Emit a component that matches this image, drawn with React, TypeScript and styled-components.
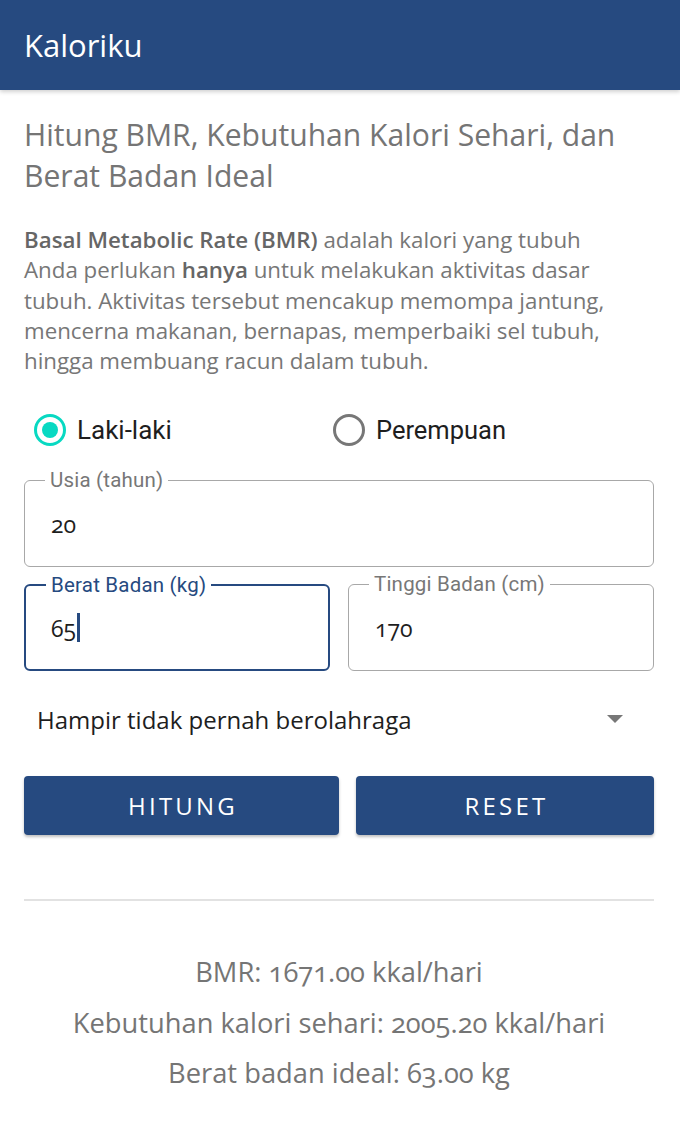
import React, { useState } from "react";
import styled, { createGlobalStyle } from "styled-components";

const Global = createGlobalStyle`
  html, body { margin: 0; padding: 0; background: #fff; }
  body { font-family: "Open Sans", "Noto Sans", sans-serif; -webkit-font-smoothing: antialiased; }
  * { box-sizing: border-box; }
`;

const Page = styled.div`
  width: 680px;
  min-height: 1146px;
  background: #fff;
`;

const AppBar = styled.header`
  height: 90px;
  background: #264a80;
  display: flex;
  align-items: center;
  padding: 0 24px;
  box-shadow: 0 2px 4px rgba(0, 0, 0, 0.18);
`;

const AppTitle = styled.h1`
  margin: 0;
  color: #fff;
  font-family: "Open Sans", sans-serif;
  font-weight: 400;
  font-size: 31px;
`;

const Content = styled.main`
  padding: 24px 26px 0 24px;
  display: flex;
  flex-direction: column;
`;

const Heading = styled.h2`
  margin: 0;
  font-weight: 400;
  font-size: 30.1px;
  line-height: 41px;
  color: #757575;
`;

const Para = styled.p`
  margin: 29px 0 0;
  max-width: 612px;
  font-size: 22.3px;
  line-height: 30.3px;
  color: #777;
`;

const Strong = styled.strong`
  font-weight: 600;
  color: #666;
`;

const RadioRow = styled.div`
  display: grid;
  grid-template-columns: 299px 1fr;
  margin-top: 30px;
  padding-left: 10px;
  height: 48px;
  align-items: center;
`;

const RadioLabel = styled.label<{ $size: number }>`
  display: flex;
  align-items: center;
  gap: 11px;
  font-family: Roboto, sans-serif;
  font-size: ${(p) => p.$size}px;
  color: #1e1e1e;
  cursor: pointer;
`;

const RadioCircle = styled.span<{ $on: boolean }>`
  width: 32px;
  height: 32px;
  border-radius: 50%;
  border: 3px solid ${(p) => (p.$on ? "#08d9c2" : "#777")};
  display: flex;
  align-items: center;
  justify-content: center;
  &::after {
    content: "";
    width: 16px;
    height: 16px;
    border-radius: 50%;
    background: #08d9c2;
    display: ${(p) => (p.$on ? "block" : "none")};
  }
`;

const Field = styled.div<{ $focused?: boolean }>`
  position: relative;
  height: 87px;
  border: ${(p) => (p.$focused ? "2.5px solid #264a80" : "1.5px solid #a8a8a8")};
  border-radius: 6px;
  display: flex;
  align-items: center;
  padding-left: ${(p) => (p.$focused ? "25px" : "26px")};
`;

const FieldLabel = styled.span<{ $focused?: boolean }>`
  position: absolute;
  top: -13px;
  left: 20px;
  padding: 0 5px;
  background: #fff;
  font-family: Roboto, sans-serif;
  font-size: 20.5px;
  line-height: 24px;
  letter-spacing: 0.2px;
  color: ${(p) => (p.$focused ? "#264a80" : "#777")};
`;

const FieldValue = styled.span`
  font-family: "Open Sans", sans-serif;
  font-size: 23px;
  color: #1e1e1e;
  font-variant-numeric: oldstyle-nums;
  display: flex;
  align-items: center;
`;

const Caret = styled.span`
  width: 2.5px;
  height: 29px;
  background: #264a80;
  margin-left: 1px;
`;

const AgeField = styled(Field)`
  margin-top: 26px;
`;

const Pair = styled.div`
  display: grid;
  grid-template-columns: 306px 306px;
  gap: 18px;
  margin-top: 17px;
`;

const Select = styled.div`
  margin-top: 12px;
  height: 72px;
  display: flex;
  align-items: center;
  justify-content: space-between;
  padding: 0 31px 0 13px;
`;

const SelectText = styled.span`
  font-size: 24px;
  color: #1e1e1e;
`;

const Arrow = styled.span`
  width: 0;
  height: 0;
  border-left: 8px solid transparent;
  border-right: 8px solid transparent;
  border-top: 8px solid #777;
`;

const Buttons = styled.div`
  display: grid;
  grid-template-columns: 315px 298px;
  gap: 17px;
  margin-top: 21px;
`;

const Button = styled.button`
  height: 59px;
  border: none;
  border-radius: 4px;
  background: #264a80;
  color: #fff;
  font-family: "Open Sans", sans-serif;
  font-size: 24px;
  letter-spacing: 3.2px;
  padding: 0 0 0 3px;
  box-shadow: 0 2px 3px rgba(0, 0, 0, 0.25);
  cursor: pointer;
`;

const Divider = styled.hr`
  margin: 64px 0 0;
  border: none;
  height: 2px;
  background: #e2e2e2;
`;

const Results = styled.div`
  margin-top: 46px;
  display: flex;
  flex-direction: column;
  align-items: center;
`;

const ResultLine = styled.div`
  font-size: 27.3px;
  line-height: 50.5px;
  color: #757575;
  font-variant-numeric: oldstyle-nums;
`;

export default function App() {
  const [sex, setSex] = useState("m");
  return (
    <Page>
      <Global />
      <AppBar>
        <AppTitle>Kaloriku</AppTitle>
      </AppBar>
      <Content>
        <Heading>Hitung BMR, Kebutuhan Kalori Sehari, dan Berat Badan Ideal</Heading>
        <Para>
          <Strong>Basal Metabolic Rate (BMR)</Strong> adalah kalori yang tubuh Anda perlukan{" "}
          <Strong>hanya</Strong> untuk melakukan aktivitas dasar tubuh. Aktivitas tersebut mencakup
          memompa jantung, mencerna makanan, bernapas, memperbaiki sel tubuh, hingga membuang racun
          dalam tubuh.
        </Para>
        <RadioRow>
          <RadioLabel $size={26} onClick={() => setSex("m")}>
            <RadioCircle $on={sex === "m"} />
            Laki-laki
          </RadioLabel>
          <RadioLabel $size={25.5} onClick={() => setSex("f")}>
            <RadioCircle $on={sex === "f"} />
            Perempuan
          </RadioLabel>
        </RadioRow>
        <AgeField>
          <FieldLabel>Usia (tahun)</FieldLabel>
          <FieldValue>20</FieldValue>
        </AgeField>
        <Pair>
          <Field $focused>
            <FieldLabel $focused>Berat Badan (kg)</FieldLabel>
            <FieldValue>
              65
              <Caret />
            </FieldValue>
          </Field>
          <Field>
            <FieldLabel>Tinggi Badan (cm)</FieldLabel>
            <FieldValue>170</FieldValue>
          </Field>
        </Pair>
        <Select>
          <SelectText>Hampir tidak pernah berolahraga</SelectText>
          <Arrow />
        </Select>
        <Buttons>
          <Button>HITUNG</Button>
          <Button>RESET</Button>
        </Buttons>
        <Divider />
        <Results>
          <ResultLine>BMR: 1671.00 kkal/hari</ResultLine>
          <ResultLine>Kebutuhan kalori sehari: 2005.20 kkal/hari</ResultLine>
          <ResultLine>Berat badan ideal: 63.00 kg</ResultLine>
        </Results>
      </Content>
    </Page>
  );
}
